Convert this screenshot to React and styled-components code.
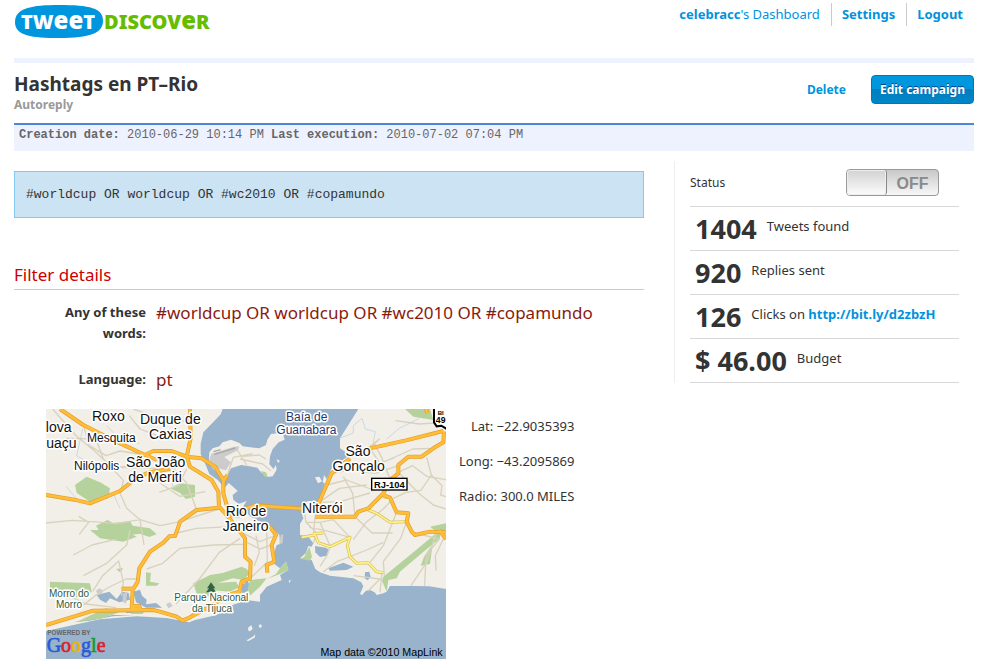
import React, { useState } from 'react';
import styled, { createGlobalStyle } from 'styled-components';

const GlobalStyle = createGlobalStyle`
  * { box-sizing: border-box; }
  body {
    margin: 0;
    background: #fff;
    color: #333;
    font: 12px/21px "Noto Sans", "Open Sans", sans-serif;
  }
`;

const Page = styled.div`
  padding: 0 10px 10px 14px;
`;

const Header = styled.header`
  display: flex;
  justify-content: space-between;
  align-items: flex-start;
  height: 63px;
  border-bottom: 5px solid #eef2ff;
`;

const Logo = styled.svg`
  display: block;
  width: 200px;
  height: 36px;
  margin-top: 4px;
`;

const Nav = styled.nav`
  display: flex;
  margin-top: 3px;
`;

const TextLink = styled.a`
  color: #0093dd;
  font-weight: ${(p) => (p.$light ? 400 : 700)};
  text-decoration: none;
  &:hover { text-decoration: underline; }
`;

const NavLink = styled(TextLink)`
  font-size: 13px;
  line-height: 23px;
  padding: 0 11px 0 10px;
  & + & { border-left: 1px solid #ccc; }
`;

const TitleBar = styled.section`
  display: flex;
  justify-content: space-between;
  align-items: flex-start;
  height: 60px;
  padding-top: 9px;
`;

const Title = styled.h1`
  margin: 0;
  font-size: 19px;
  line-height: 24px;
`;

const Subtitle = styled.p`
  margin: 0;
  color: #999;
  font-size: 12px;
  font-weight: 700;
  line-height: 18px;
`;

const Actions = styled.div`
  display: flex;
  align-items: center;
  gap: 25px;
  padding-top: 3px;
`;

const EditButton = styled.button`
  height: 29px;
  padding: 0 8px;
  border: 1px solid #0078b4;
  border-radius: 4px;
  background: linear-gradient(#0099e0 0, #0095dc 50%, #007dbb 50%, #0087c9 100%);
  color: #fff;
  font: 700 12px/21px "Noto Sans", "Open Sans", sans-serif;
  text-shadow: 0 -1px 0 #00408a;
  cursor: pointer;
`;

const DateBar = styled.div`
  height: 28px;
  padding-left: 5px;
  border-top: 2px solid #4a88dc;
  background: #eef2ff;
  color: #666;
  font: 12px/20px "Liberation Mono", monospace;
`;

const Columns = styled.div`
  display: grid;
  grid-template-columns: minmax(0, 1fr) 300px;
  column-gap: 30px;
  align-items: start;
  padding-top: 10px;
`;

const Query = styled.div`
  margin-top: 10px;
  padding: 12px 11px;
  border: 1px solid #84c8f2;
  background: #cbe3f2;
  color: #333;
  font: 13px/21px "Liberation Mono", monospace;
`;

const SectionTitle = styled.h2`
  margin: 46px 0 0;
  padding-bottom: 3px;
  border-bottom: 1px solid #ccc;
  color: #cc0000;
  font-size: 17px;
  font-weight: 400;
  line-height: 22px;
`;

const Details = styled.dl`
  display: grid;
  grid-template-columns: 132px minmax(0, 1fr);
  column-gap: 10px;
  row-gap: 25px;
  margin: 12px 0 0;
`;

const Term = styled.dt`
  padding-left: 40px;
  font-size: 13px;
  font-weight: 700;
  text-align: right;
`;

const Value = styled.dd`
  margin: 0;
  color: #8b1a0e;
  font-size: 17px;
`;

const Location = styled.div`
  display: flex;
  flex-wrap: wrap;
  gap: 13px;
  margin: 19px 0 0 32px;
`;

const MapView = styled.svg`
  display: block;
  width: 400px;
  height: 250px;
`;

const Coordinates = styled.ul`
  display: flex;
  flex-direction: column;
  gap: 14px;
  margin: 7px 0 0;
  padding: 0;
  font-size: 13px;
  list-style: none;
  text-align: right;
`;

const Sidebar = styled.aside`
  padding: 0 15px;
  border-left: 1px solid #eee;
`;

const Row = styled.div`
  display: flex;
  align-items: ${(p) => (p.$top ? 'flex-start' : 'center')};
  gap: 10px;
  height: ${(p) => (p.$top ? 44 : 46)}px;
  padding: ${(p) => (p.$top ? '0 5px' : '0 20px 3px 0')};
  justify-content: ${(p) => (p.$top ? 'flex-start' : 'space-between')};
  border-bottom: 1px solid #d8d8d8;
`;

const Figure = styled.strong`
  font-size: 27px;
  line-height: 43px;
`;

const Caption = styled.span`
  font-size: 13px;
  line-height: 39px;
`;

const Switch = styled.span`
  position: relative;
  display: flex;
  width: 93px;
  height: 27px;
  overflow: hidden;
  border: 1px solid #999;
  border-radius: 4px;
  background: linear-gradient(#c8c8c8, #f8f8f8);
  flex-direction: ${(p) => (p.$on ? 'row-reverse' : 'row')};
`;

const SwitchInput = styled.input`
  position: absolute;
  inset: 0;
  width: 100%;
  height: 100%;
  margin: 0;
  opacity: 0;
  cursor: pointer;
`;

const Knob = styled.span`
  width: 40px;
  border-right: 1px solid #888;
  border-radius: 3px;
  background: linear-gradient(#d2d2d2, #fcfcfc);
  box-shadow: inset 0 0 0 1px #eee;
`;

const SwitchText = styled.span`
  flex: 1;
  color: #8a8a8a;
  font: 700 16px/27px "Liberation Sans", sans-serif;
  text-align: center;
`;

const LogoMark = () => (
  <Logo viewBox="0 0 200 36" role="img" aria-label="TweetDiscover">
    <path d="M1 18C1 4 18 1 45 1C76 1 89 4 89 17C89 29 76 34 45 34C18 34 1 32 1 18Z" fill="#0096de" />
    <g fontFamily="Noto Sans, sans-serif" fontWeight="900">
      <text x="7" y="25" fontSize="20" fill="#fff">
        TW<tspan fontSize="24">ee</tspan>T
      </text>
      <text x="90" y="25" fontSize="20" fill="#65bd00">
        DISCOV<tspan fontSize="24">e</tspan>R
      </text>
    </g>
  </Logo>
);

const highways = [
  'M42 0L112 48L205 95L297 138L332 153',
  'M297 138L322 126L377 126L422 143L467 148L507 173L532 213L532 253L542 288L560 305',
  'M432 0L434 88L422 143L432 173L497 213L517 248L519 293L542 318L582 368L597 388L597 443L614 458L612 508L587 518L580 548L552 556',
  'M544 198L532 218',
  'M0 258L85 272L132 283L222 246L272 206L310 190L372 180',
  'M519 296L452 303L402 338L394 363L387 381L370 382L352 401L312 428L280 478L275 518L260 543L257 598L284 602L280 592L257 590',
  'M227 539L262 539',
  'M0 648L142 605L322 603L342 608L392 623L410 635L432 625L482 598L552 556',
  'M542 318L577 320L602 298L627 289L782 300',
  'M672 353L690 378L677 408L685 458L662 468L664 491',
  'M807 323L927 323L937 308L967 298L1012 253L1032 213L1057 193L1057 168L1087 143L1127 143L1162 118L1192 100L1194 68',
  'M972 118L1080 94L1192 66',
  'M817 284L842 228L857 193L912 148',
  'M1012 258L1032 266L1052 310L1087 313L1082 338L1097 368L1107 378L1152 368L1200 370',
  'M1140 0L1144 12M1180 364L1200 390',
];

const avenues = [
  'M967 303L992 313L1032 340L1082 338',
  'M1002 262L1030 266',
  'M767 385L807 378L817 401L852 413L912 385L904 410L912 443L932 463L967 461L992 488L1012 491',
  'M432 625L452 608',
  'M802 374L832 372',
];

const streets = [
  'M20 0L88 78L150 130L192 170L230 176L332 178M112 48L130 110L180 140L222 126L298 138M60 88L150 90L172 150L232 214L225 246M330 153L382 178L422 222L452 303M250 20L282 60L334 80L434 88M262 0L340 28L430 38',
  'M0 342L78 334L140 338L212 344L282 332L342 350L402 338L462 318L519 300M100 376L128 340L98 322M220 248L242 298L282 332M350 180L342 222L402 262L478 248M132 170L182 180L252 170M422 180L397 230L340 250',
  'M112 500L182 463L242 408L252 363M82 438L138 408L208 391M140 547L170 500L218 456L232 520L226 560M190 534L240 510L280 510M110 590L150 558L190 534M62 557L120 585L210 596M390 585L460 510L520 430L582 388',
  'M402 418L502 408L592 406M392 372L452 358L572 352M282 332L294 408M302 480L350 463L402 418M612 508L645 478L664 458L662 363M602 400L642 420L677 408M630 380L640 430L625 470M582 368L642 398L690 378',
  'M544 198L562 145L620 134M582 150L650 165L675 185M572 120L602 168M590 142L640 138L660 150',
  'M912 138L952 128L1000 90L972 118L1002 163L1044 146M857 193L912 183L988 193L1057 170M842 228L902 213L982 243L1032 213M822 278L880 238L962 228M817 280L882 278L972 252M892 203L920 253L927 323M982 98L1008 148L1032 210',
  'M1057 190L1100 170L1142 202L1200 212M1142 145L1156 198L1125 244L1080 250M1057 190L1120 254L1162 288L1200 300M1156 198L1188 230L1184 258L1200 263M1034 150L1100 120L1162 118M1080 250L1042 268L1012 300L960 340L922 392M1048 35L1120 45L1200 40',
  'M774 300L780 340L812 372L802 403M780 340L822 340L862 332M790 355L840 365L912 385M807 323L802 380M822 340L852 410M862 332L912 385M927 323L978 372L1040 372M1052 310L1012 410L972 460M1082 338L1064 388L1012 458L1015 500M912 443L872 458L832 488M852 413L842 442L822 472M912 443L962 423L1012 400M922 500L1002 510L967 545M1008 491L1002 550M1098 370L1180 390L1140 440L1136 530M1192 390L1168 440L1170 485M1174 363L1142 460L1095 530',
];

const parks = [
  'M87 228L122 203L162 220L192 238L187 268L132 278L92 252Z',
  'M372 238L402 223L447 228L447 263L420 270L402 252Z',
  'M150 350L185 333L200 342L252 336L260 350L312 358L332 376L310 384L282 374L240 380L200 366L162 370Z',
  'M132 363L232 363L272 383L232 398L162 388Z',
  'M12 518L132 523L137 548L112 568L40 556L12 540Z',
  'M300 490L315 492L312 518L340 523L332 530L300 530ZM210 480L232 478L222 490Z',
  'M442 523L492 498L530 492L587 473L602 480L612 493L592 513L560 508L512 523L492 563L452 555Z',
  'M492 523L570 518L580 535L552 548L492 543Z',
  'M612 513L662 508L642 533L612 560L605 540ZM702 478L720 458L727 483L702 495L662 510L690 495Z',
  'M1012 503L1062 463L1122 413L1182 363L1182 388L1127 433L1062 488L1052 508L1027 513L1022 548L1008 515Z',
  'M1135 442L1160 405L1152 465L1124 470Z',
  'M1077 0L1152 0L1162 33L1102 23ZM1152 353L1200 343L1200 370L1172 368Z',
  'M645 186L660 190L666 205L654 202ZM775 443L790 413L798 443L792 455L765 450Z',
  'M130 620L180 598L220 610L170 628L90 640ZM260 598L300 600L290 615L255 615Z',
];

const labels = [
  ['Roxo', 187, 36, 42], ['lova', 38, 70, 42], ['uaçu', 46, 117, 42],
  ['Duque de', 373, 45, 42], ['Caxias', 373, 91, 42], ['Mesquita', 196, 99, 36],
  ['Nilópolis', 152, 182, 36], ['São João', 329, 174, 42], ['de Meriti', 327, 218, 42],
  ['São', 936, 141, 42], ['Gonçalo', 938, 186, 42], ['Rio de', 600, 321, 42],
  ['Janeiro', 599, 366, 42], ['Niterói', 829, 312, 42],
];

const blueLabels = [['Baía de', 782, 37, 36], ['Guanabara', 781, 76, 36]];
const greenLabels = [
  ['Morro do', 69, 564, 30], ['Morro', 69, 597, 30],
  ['Parque Nacional', 496, 577, 30], ['da Tijuca', 498, 610, 30],
];

const googleLetters = [
  ['G', '#2a5bd7'], ['o', '#d8232a'], ['o', '#e9b500'], ['g', '#2a5bd7'], ['l', '#109a35'], ['e', '#d8232a'],
];

const Labels = ({ items, fill }) => (
  <g fill={fill} stroke="#fff" strokeWidth="9" strokeLinejoin="round" paintOrder="stroke" textAnchor="middle">
    {items.map(([text, x, y, size]) => (
      <text key={text + y} x={x} y={y} fontSize={size}>{text}</text>
    ))}
  </g>
);

const RioMap = () => (
  <MapView viewBox="0 0 1200 750" role="img" aria-label="Map of Rio de Janeiro" fontFamily="Liberation Sans, sans-serif">
    <rect width="1200" height="750" fill="#99b3cc" />
    <g fill="#f2efe9">
      <path d="M0 0H530L524 16L502 39L472 70L464 104L464 136L478 165L490 195L516 214L536 236L548 222L562 234L575 246L560 258L562 272L578 285L602 276L590 295L612 322L672 353L692 370L700 378L702 405L692 408L687 423L682 463L702 478L720 458L727 483L702 498L707 513L662 533L642 558L642 578L602 573L560 588L512 618L447 633L430 640L362 627L272 622L162 631L82 648L0 666Z" />
      <path d="M490 130L500 118L520 112L530 100L555 92L580 102L590 112L640 118L660 108L664 92L675 75L700 72L712 78L716 92L698 100L680 120L672 142L670 165L682 180L690 168L692 182L680 202L665 204L645 190L634 176L610 172L585 168L555 178L545 195L538 206L512 190L488 165Z" />
      <path d="M937 0L907 48L882 88L882 118L912 138L880 160L857 178L837 223L817 278L785 276L767 290L767 313L772 328L762 345L762 378L787 383L802 403L797 413L787 411L780 432L762 448L797 453L808 480L822 490L852 500L922 508L946 520L952 532L942 555L948 558L960 545L972 543L986 550L992 558L1012 553L1022 548L1032 531L1102 531L1150 532L1200 540V0Z" />
      <path d="M807 205L820 203L828 217L816 223ZM834 198L842 210L838 224L830 220ZM607 655L616 649L620 660L612 667L606 664ZM638 648L645 646L648 654L641 657ZM602 694L620 683L628 676L626 686L606 697ZM728 515L735 512L730 523ZM692 150L702 156L696 162Z" />
      <path d="M704 378L712 376L710 402L700 406Z" fill="#ccc" />
    </g>
    <g fill="#99b3cc">
      <path d="M807 411L840 416L850 424L843 440L822 444L808 430Z" />
      <path d="M847 478L892 461L922 473L902 483L852 485ZM957 490L970 488L974 504L965 514L956 508Z" />
      <path d="M152 558L190 548L212 570L228 548L248 552L252 572L220 580L192 568L180 582L162 572ZM262 548L282 542L288 560L302 572L300 586L330 582L348 596L300 596L270 580Z" />
      <path d="M605 515L612 530L604 550L587 552L586 530ZM240 606L270 606L268 612L240 612Z" />
      <path d="M82 640L120 632L200 618L262 618L200 622L130 635Z" />
    </g>
    <g fill="#cccccc">
      <path d="M496 134L562 114L580 112L576 124L535 144L555 160L540 184L515 178L488 158Z" />
      <path d="M505 136L568 117M502 128L524 122" stroke="#aaa" strokeWidth="4" />
      <path d="M150 545L160 538L172 545L166 556L154 554ZM360 586L372 580L380 590L368 598ZM230 554L244 548L240 584L230 578Z" />
    </g>
    <g fill="#b5d29c">{parks.map((d) => <path key={d} d={d} />)}</g>
    <g fill="none" stroke="#d8d2bd" strokeWidth="4" strokeLinejoin="round">
      {streets.map((d) => <path key={d} d={d} />)}
    </g>
    <g fill="none" stroke="#b7cbe0" strokeWidth="2">
      <path d="M200 250L222 298M110 60L92 140L128 162M182 50L220 90L252 88L280 105M60 232L102 282M412 155L372 182L380 232M880 88L922 72L922 50L948 28L958 60L988 68L982 98M1022 90L1060 58L1120 28" />
    </g>
    <g fill="none" strokeLinejoin="round">
      <g stroke="#d7bd62" strokeWidth="9">{avenues.map((d) => <path key={d} d={d} />)}</g>
      <g stroke="#fff482" strokeWidth="5">{avenues.map((d) => <path key={d} d={d} />)}</g>
      <g stroke="#e39e26" strokeWidth="12">{highways.map((d) => <path key={d} d={d} />)}</g>
      <g stroke="#ffbd39" strokeWidth="8">{highways.map((d) => <path key={d} d={d} />)}</g>
    </g>
    <path d="M495 520L483 538H489L480 550H491V558H499V550H511L502 538H508Z" fill="#316245" />
    <Labels items={labels} fill="#111" />
    <Labels items={blueLabels} fill="#29366f" />
    <Labels items={greenLabels} fill="#315b42" />
    <g textAnchor="middle" fill="#000" fontWeight="700">
      <path d="M1164 -6V40L1172 52L1186 50L1206 62V-6Z" fill="#fff" stroke="#000" strokeWidth="6" />
      <text x="1184" y="17" fontSize="18">BI</text>
      <text x="1184" y="42" fontSize="26">49</text>
      <rect x="977" y="208" width="106" height="35" fill="#fff" stroke="#000" strokeWidth="4" />
      <text x="1030" y="236" fontSize="28">RJ-104</text>
    </g>
    <text x="4" y="677" fontSize="19" fontWeight="700" fill="#666">POWERED BY</text>
    <text x="2" y="728" fontSize="60" fontFamily="Liberation Serif, serif">
      {googleLetters.map(([letter, color], i) => (
        <tspan key={i} fill={color} stroke={color} strokeWidth="2">{letter}</tspan>
      ))}
    </text>
    <text x="1190" y="742" fontSize="32" textAnchor="end" fill="#000">Map data ©2010 MapLink</text>
  </MapView>
);

const stats = [
  { value: '1404', caption: 'Tweets found' },
  { value: '920', caption: 'Replies sent' },
  { value: '126', caption: 'Clicks on ', link: 'http://bit.ly/d2zbzH' },
  { value: '$ 46.00', caption: 'Budget' },
];

const StatusRow = () => {
  const [on, setOn] = useState(false);
  return (
    <Row>
      <label htmlFor="status">Status</label>
      <Switch $on={on}>
        <Knob />
        <SwitchText>{on ? 'ON' : 'OFF'}</SwitchText>
        <SwitchInput id="status" type="checkbox" checked={on} onChange={(e) => setOn(e.target.checked)} />
      </Switch>
    </Row>
  );
};

export default function App() {
  return (
    <Page>
      <GlobalStyle />
      <Header>
        <LogoMark />
        <Nav>
          <NavLink href="#dashboard" $light><b>celebracc</b>'s Dashboard</NavLink>
          <NavLink href="#settings">Settings</NavLink>
          <NavLink href="#logout">Logout</NavLink>
        </Nav>
      </Header>
      <TitleBar>
        <div>
          <Title>Hashtags en PT–Rio</Title>
          <Subtitle>Autoreply</Subtitle>
        </div>
        <Actions>
          <TextLink href="#delete">Delete</TextLink>
          <EditButton type="button">Edit campaign</EditButton>
        </Actions>
      </TitleBar>
      <DateBar>
        <b>Creation date:</b> 2010-06-29 10:14 PM <b>Last execution:</b> 2010-07-02 07:04 PM
      </DateBar>
      <Columns>
        <main>
          <Query>#worldcup OR worldcup OR #wc2010 OR #copamundo</Query>
          <SectionTitle>Filter details</SectionTitle>
          <Details>
            <Term>Any of these words:</Term>
            <Value>#worldcup OR worldcup OR #wc2010 OR #copamundo</Value>
            <Term>Language:</Term>
            <Value>pt</Value>
          </Details>
          <Location>
            <RioMap />
            <Coordinates>
              <li>Lat: −22.9035393</li>
              <li>Long: −43.2095869</li>
              <li>Radio: 300.0 MILES</li>
            </Coordinates>
          </Location>
        </main>
        <Sidebar>
          <StatusRow />
          {stats.map((s) => (
            <Row key={s.value} $top>
              <Figure>{s.value}</Figure>
              <Caption>
                {s.caption}
                {s.link && <TextLink href={s.link}>{s.link}</TextLink>}
              </Caption>
            </Row>
          ))}
        </Sidebar>
      </Columns>
    </Page>
  );
}
